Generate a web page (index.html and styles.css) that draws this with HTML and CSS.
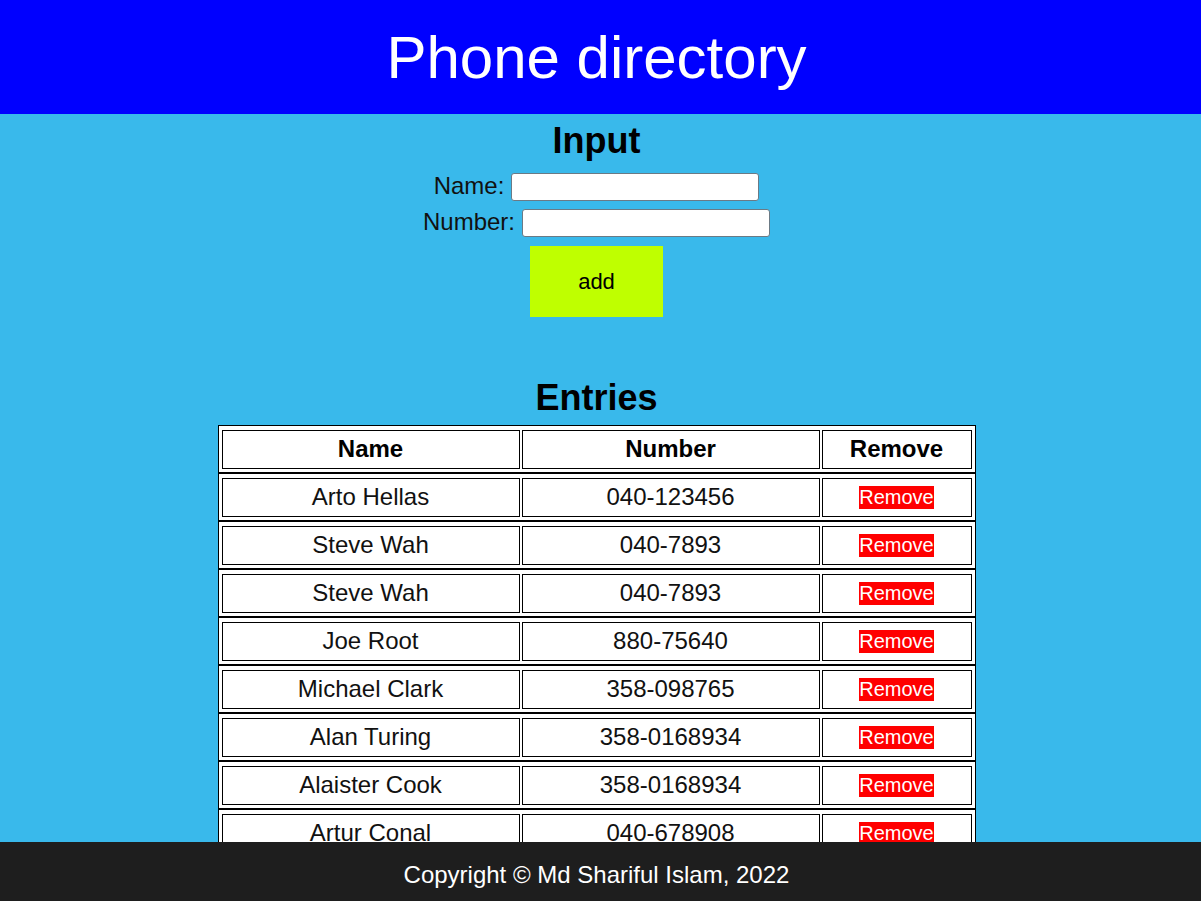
FILE: index.html
```html
<!DOCTYPE html>
<html lang="en">
<head>
<meta charset="utf-8">
<title>Phone directory</title>
<link rel="stylesheet" href="styles.css">
</head>
<body>
<header class="top">
  <h1 class="title">Phone directory</h1>
</header>
<main class="main">
  <section class="input-section">
    <h2 class="section-title input-title">Input</h2>
    <form class="form">
      <div class="field"><label class="label" for="name">Name:</label><input class="text-input" id="name" type="text"></div>
      <div class="field"><label class="label" for="number">Number:</label><input class="text-input" id="number" type="text"></div>
      <div class="actions"><button class="add-btn" type="button">add</button></div>
    </form>
  </section>
  <section class="entries-section">
    <h2 class="section-title entries-title">Entries</h2>
    <div class="table">
      <div class="row head-row">
        <div class="cell">Name</div>
        <div class="cell">Number</div>
        <div class="cell">Remove</div>
      </div>
      <div class="row">
        <div class="cell">Arto Hellas</div>
        <div class="cell">040-123456</div>
        <div class="cell"><button class="remove-btn" type="button">Remove</button></div>
      </div>
      <div class="row">
        <div class="cell">Steve Wah</div>
        <div class="cell">040-7893</div>
        <div class="cell"><button class="remove-btn" type="button">Remove</button></div>
      </div>
      <div class="row">
        <div class="cell">Steve Wah</div>
        <div class="cell">040-7893</div>
        <div class="cell"><button class="remove-btn" type="button">Remove</button></div>
      </div>
      <div class="row">
        <div class="cell">Joe Root</div>
        <div class="cell">880-75640</div>
        <div class="cell"><button class="remove-btn" type="button">Remove</button></div>
      </div>
      <div class="row">
        <div class="cell">Michael Clark</div>
        <div class="cell">358-098765</div>
        <div class="cell"><button class="remove-btn" type="button">Remove</button></div>
      </div>
      <div class="row">
        <div class="cell">Alan Turing</div>
        <div class="cell">358-0168934</div>
        <div class="cell"><button class="remove-btn" type="button">Remove</button></div>
      </div>
      <div class="row">
        <div class="cell">Alaister Cook</div>
        <div class="cell">358-0168934</div>
        <div class="cell"><button class="remove-btn" type="button">Remove</button></div>
      </div>
      <div class="row">
        <div class="cell">Artur Conal</div>
        <div class="cell">040-678908</div>
        <div class="cell"><button class="remove-btn" type="button">Remove</button></div>
      </div>
    </div>
  </section>
</main>
<footer class="footer">Copyright © Md Shariful Islam, 2022</footer>
</body>
</html>
```

FILE: styles.css
```css
html, body {
  margin: 0;
  padding: 0;
}
body {
  background: #39b9eb;
  font-family: "Liberation Sans", Arial, sans-serif;
  font-size: 24px;
  color: #000;
  text-align: center;
}
.top {
  background: #0000ff;
  height: 114px;
  display: flex;
  align-items: center;
  justify-content: center;
  padding-right: 8px;
}
.title {
  margin: 0;
  font-size: 60px;
  line-height: 69px;
  font-weight: normal;
  color: #fff;
}
.main {
  padding-right: 8px;
  padding-bottom: 80px;
}
.section-title {
  margin: 0;
  font-size: 36px;
  line-height: 41px;
  font-weight: bold;
}
.input-title {
  padding-top: 6px;
}
.form {
  margin-top: 8px;
}
.field {
  display: flex;
  justify-content: center;
  align-items: center;
  gap: 7px;
  height: 36px;
}
.label {
  line-height: 28px;
  margin-top: -3px;
  color: #111;
}
.text-input {
  box-sizing: border-box;
  width: 248px;
  height: 28px;
  border: 1px solid #6b7a85;
  border-radius: 3px;
  background: #fff;
  padding: 1px 2px;
  font-size: 16px;
  font-family: inherit;
}
.actions {
  display: flex;
  justify-content: center;
  margin-top: 5px;
}
.add-btn {
  width: 133px;
  height: 71px;
  border: none;
  background: #bfff00;
  font-family: inherit;
  font-size: 22px;
  color: #000;
  padding: 0;
}
.entries-title {
  margin-top: 60px;
}
.table {
  width: 756px;
  margin: 7px auto 0;
  border: 1px solid #000;
  background: #fff;
}
.row {
  display: grid;
  grid-template-columns: 298px 298px 150px;
  column-gap: 2px;
  padding: 4px 3px 3px;
}
.row + .row {
  border-top: 2px solid #000;
}
.cell {
  border: 1px solid #000;
  padding: 4px 0 6px;
  line-height: 27px;
  display: flex;
  align-items: center;
  justify-content: center;
  color: #111;
}
.head-row .cell {
  font-weight: bold;
  color: #000;
}
.remove-btn {
  border: none;
  padding: 0;
  margin-top: 2px;
  background: #f00;
  color: #fff;
  font-family: inherit;
  font-size: 20px;
  line-height: 23px;
}
.footer {
  position: fixed;
  left: 0;
  right: 0;
  bottom: 0;
  height: 59px;
  box-sizing: border-box;
  padding-top: 6px;
  line-height: 53px;
  padding-right: 8px;
  background: #1e1e1e;
  color: #fff;
  font-size: 24px;
}
```
